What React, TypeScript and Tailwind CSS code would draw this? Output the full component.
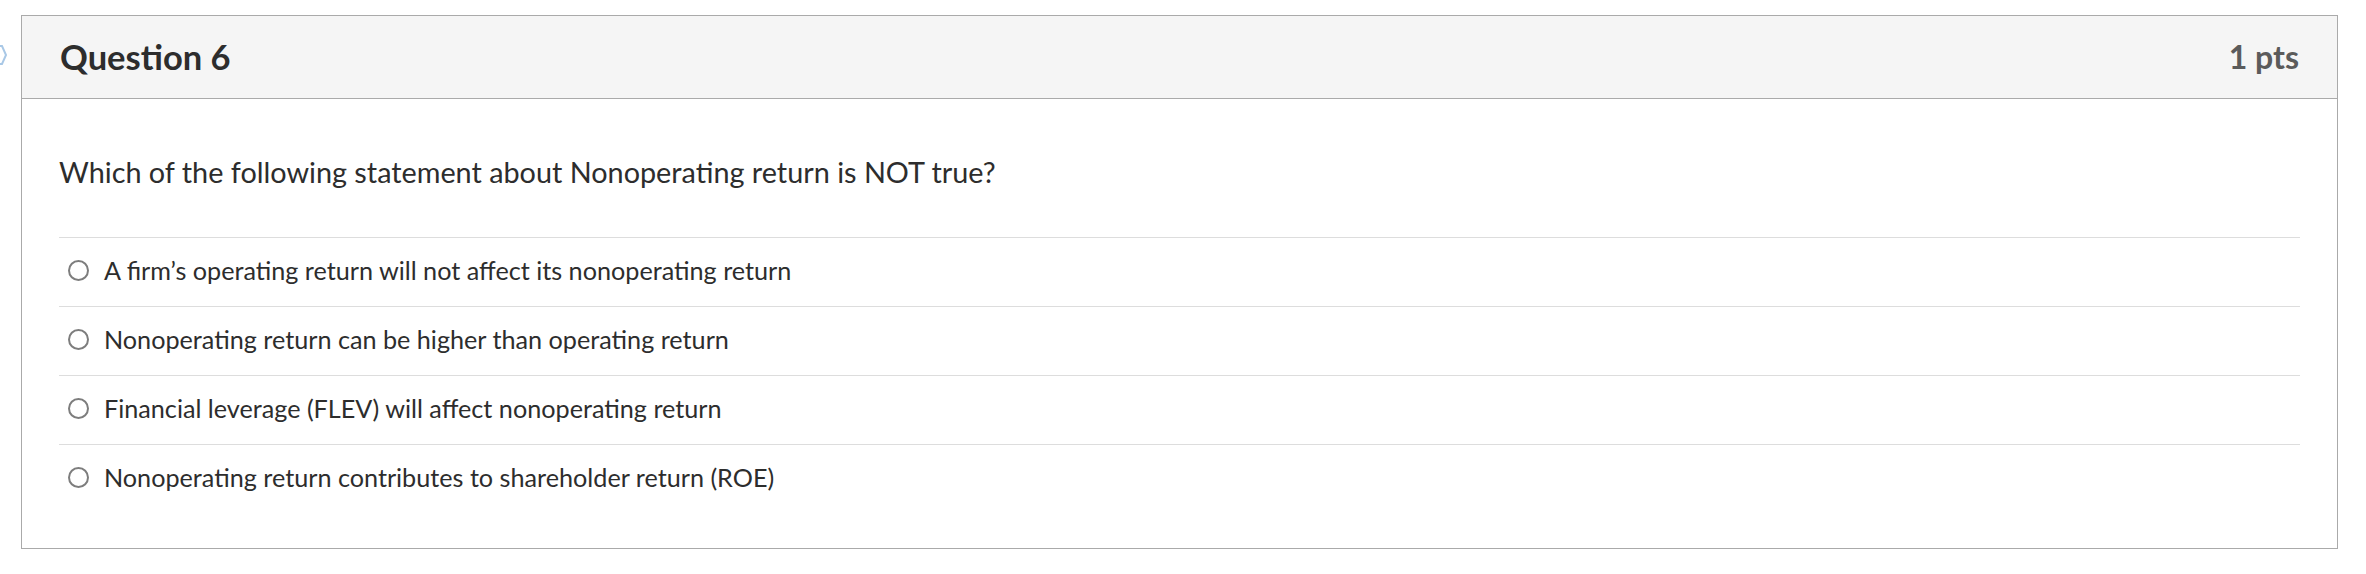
const options = [
  "A firm’s operating return will not affect its nonoperating return",
  "Nonoperating return can be higher than operating return",
  "Financial leverage (FLEV) will affect nonoperating return",
  "Nonoperating return contributes to shareholder return (ROE)",
];

function Radio() {
  return (
    <span className="flex-shrink-0 w-[21px] h-[21px] rounded-full border-2 border-[#7d7d7d] bg-white" />
  );
}

export default function App() {
  return (
    <div
      className="relative w-[2366px] h-[574px] bg-white"
      style={{ fontFamily: "Lato, 'Open Sans', sans-serif" }}
    >
      {/* cut-off flag icon at the page edge */}
      <svg
        className="absolute left-0 top-[44px]"
        width="8"
        height="22"
        viewBox="0 0 8 22"
        fill="none"
      >
        <path d="M-6 2 L2 2 L6 11 L2 20 L-6 20" stroke="#a9c8e6" strokeWidth="2" />
      </svg>

      <div className="absolute left-[21px] top-[15px] w-[2317px] h-[534px] border border-[#aaaaaa] flex flex-col">
        {/* Header */}
        <div className="h-[83px] flex-shrink-0 bg-[#f5f5f5] border-b border-[#aaaaaa] flex items-center justify-between px-[38px]">
          <h2 className="text-[34.5px] font-bold text-[#2d2d2d] leading-none">Question 6</h2>
          <span className="text-[32px] font-bold text-[#5b5b5b] leading-none">1 pts</span>
        </div>

        {/* Body */}
        <div className="px-[37px] pt-[52px]">
          <p className="text-[28.8px] leading-[42px] text-[#2d2d2d]">
            Which of the following statement about Nonoperating return is NOT true?
          </p>

          <div className="mt-[44px]">
            {options.map((text) => (
              <label
                key={text}
                className="h-[69px] border-t border-[#dddddd] flex items-center gap-[15px] pl-[9px] pb-[3px]"
              >
                <Radio />
                <span className="text-[25.2px] text-[#2d2d2d]">{text}</span>
              </label>
            ))}
          </div>
        </div>
      </div>
    </div>
  );
}
